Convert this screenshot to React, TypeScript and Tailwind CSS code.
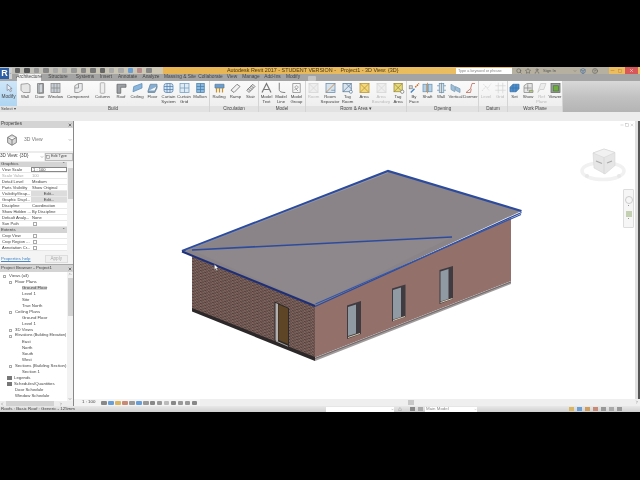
import type { ReactNode } from 'react';
import { ChevronDown, ChevronLeft, ChevronRight, ChevronUp, X, Minus, Square, HelpCircle, Star, Search, User, Box, Triangle } from 'lucide-react';

const tabs = [
  { label: 'Architecture', w: 24, active: true },
  { label: 'Structure', w: 24, ml: 5 },
  { label: 'Systems', w: 18, ml: 6 },
  { label: 'Insert', w: 12, ml: 6 },
  { label: 'Annotate', w: 19, ml: 6 },
  { label: 'Analyze', w: 16, ml: 6 },
  { label: 'Massing & Site', w: 28, ml: 7 },
  { label: 'Collaborate', w: 21, ml: 6 },
  { label: 'View', w: 10, ml: 6 },
  { label: 'Manage', w: 16, ml: 6 },
  { label: 'Add-Ins', w: 15, ml: 6 },
  { label: 'Modify', w: 14, ml: 6 },
];

const S = ({ children }: { children: ReactNode }) => (
  <svg viewBox="0 0 16 16" className="h-[12px] w-[13px]" fill="none" strokeWidth="1">
    {children}
  </svg>
);

const icons: Record<string, ReactNode> = {
  wall: <path d="M2 3l9-1 3 2v10l-9 0-3-3z" fill="#e6e6e6" stroke="#888" />,
  door: <path d="M4 2h8v13H4z M6 3l5-1v12l-5 1z" fill="#cfd4d8" stroke="#777" />,
  window: (
    <g stroke="#888">
      <rect x="2" y="2" width="12" height="12" fill="#c8cfd6" />
      <path d="M6 2v12M10 2v12M2 8h12" />
    </g>
  ),
  component: <path d="M3 5l5-3h5v9l-5 3H3z M8 2v6H3" fill="#e9ebec" stroke="#888" />,
  column: <rect x="5" y="1" width="6" height="14" rx="1" fill="#eeeeee" stroke="#a0a0a0" />,
  roof: <path d="M2 15V3h12v4H7v8z" fill="#9aa0a5" stroke="#666" />,
  ceiling: <path d="M3 6l11-4v6L2 13z" fill="#8ab6de" stroke="#5c8cb5" />,
  floor: <path d="M2 12l3-9h9v5l-3 6H2z M2 12l9 0 3-6" fill="#86aed2" stroke="#67849c" />,
  curtainSystem: (
    <g stroke="#4f7fb2">
      <rect x="2" y="2" width="12" height="12" rx="3" fill="#d8e6f2" />
      <path d="M6 2v12M10 2v12M2 6h12M2 10h12" />
    </g>
  ),
  curtainGrid: (
    <g stroke="#6f9dc2">
      <rect x="2" y="2" width="12" height="12" fill="#dfeaf3" />
      <path d="M8 2v12M2 8h12" />
    </g>
  ),
  mullion: (
    <g stroke="#457fae">
      <rect x="3" y="2" width="10" height="12" fill="#8cb8dc" />
      <path d="M8 2v12M3 6h10M3 10h10" />
    </g>
  ),
  railing: (
    <g>
      <path d="M2 3h12v5H2z" fill="#6c9dcc" stroke="#5a7d9c" />
      <path d="M4 8v6M8 8v6M12 8v6" stroke="#c98f22" strokeWidth="1.6" />
    </g>
  ),
  ramp: <path d="M2 11l8-8 4 3-8 8z" fill="#f2f2f2" stroke="#666" />,
  stair: <path d="M3 11l8-8 3 3-8 8zM5 9l3 3M7 7l3 3M9 5l3 3" fill="#e4e4e4" stroke="#666" />,
  modelText: <path d="M2 14L8 2l6 12M5 10h6" stroke="#777" strokeWidth="1.6" />,
  modelLine: <path d="M5 1v9c0 3 3 4 8 4" stroke="#666" strokeWidth="1.1" />,
  modelGroup: <path d="M3 2h10v12H3zM8 5a2 2 0 1 0 .1 0zM5 11l2-2 3 3" stroke="#888" />,
  disabled: (
    <g stroke="#d4d4d4">
      <rect x="2" y="2" width="12" height="12" fill="#eeeeee" />
      <path d="M2 2l12 12M14 2L2 14" />
    </g>
  ),
  roomSep: (
    <g stroke="#6a8dac">
      <rect x="2" y="2" width="12" height="12" fill="#d6e2ec" />
      <path d="M2 14L14 2" stroke="#c47a2a" />
      <path d="M9 11h5" />
    </g>
  ),
  tagRoom: (
    <g stroke="#5c7d9b">
      <rect x="2" y="2" width="11" height="11" fill="#d9e4ee" />
      <path d="M2 13L13 2M6 2l7 7" />
      <circle cx="12.5" cy="13" r="2" fill="#fff" />
    </g>
  ),
  area: (
    <g stroke="#b39232">
      <rect x="2" y="2" width="12" height="12" fill="#f3d77a" />
      <path d="M2 2l12 12M14 2L2 14" />
    </g>
  ),
  tagArea: (
    <g stroke="#9c8832">
      <rect x="2" y="2" width="11" height="11" fill="#e5da7f" />
      <path d="M2 2l11 11M13 2L2 13" />
      <circle cx="13" cy="13" r="2.2" fill="#fff" stroke="#777" />
    </g>
  ),
  byFace: (
    <g>
      <path d="M3 14l5-5" stroke="#4386c7" strokeWidth="2" />
      <path d="M9 7l5-5" stroke="#c46b2a" strokeWidth="2" strokeDasharray="2 1" />
      <rect x="1" y="5" width="4" height="4" fill="#d8d8d8" stroke="#888" />
    </g>
  ),
  shaft: (
    <g stroke="#6b95b6">
      <rect x="2" y="3" width="5" height="10" fill="#b7d0e4" />
      <rect x="9" y="3" width="5" height="10" fill="#b7d0e4" />
      <path d="M8 1v14" stroke="#c87a2b" />
    </g>
  ),
  openWall: (
    <g stroke="#6b95b6">
      <path d="M2 5h12M2 11h12" />
      <rect x="5" y="2" width="6" height="12" fill="#cfe0ec" />
      <path d="M8 1v14" stroke="#888" />
    </g>
  ),
  vertical: <path d="M2 3l5 3v7L2 10zM8 6l6 3v5l-6-3z" fill="#9dbfd9" stroke="#7a9cb6" />,
  dormer: <path d="M2 14l6-5 2-7h4M2 14h6l1-5" stroke="#bd7161" strokeWidth="1.1" />,
  level: <path d="M2 12l5-6 3 2 4-6M4 3l8 9" stroke="#d4d4d4" strokeDasharray="2 1" />,
  grid: <path d="M5 1v14M11 1v14M1 5h14M1 11h14" stroke="#d4d4d4" />,
  set: (
    <g stroke="#3b70a5">
      <path d="M2 7l4-4h8v6l-4 4H2z" fill="#4a8fd0" />
      <path d="M6 3v10M10 3v10M2 8h12" />
    </g>
  ),
  show: (
    <g stroke="#888">
      <path d="M2 14V5l4-3h7v8l-4 4z" fill="#e5e5e5" />
      <path d="M7 3v9M2 8h10" />
      <path d="M9 11h5v3H9z" fill="#b3cf6f" />
    </g>
  ),
  refPlane: <path d="M3 14L7 2h7l-3 8H6z" fill="#ececec" stroke="#c8c8c8" />,
  viewer: (
    <g>
      <rect x="2" y="2" width="12" height="12" fill="#9ca2a7" stroke="#666" />
      <rect x="5" y="5" width="7" height="7" fill="#6fae3e" stroke="#4e7b30" />
    </g>
  ),
};

type Tool = { label: string[]; w: number; icon: string; off?: boolean; caret?: boolean };

const panels: { title: string; tools: Tool[]; caret?: boolean }[] = [
  {
    title: 'Build',
    tools: [
      { label: ['Wall'], w: 16, icon: 'wall', caret: true },
      { label: ['Door'], w: 14, icon: 'door' },
      { label: ['Window'], w: 17, icon: 'window' },
      { label: ['Component'], w: 28, icon: 'component', caret: true },
      { label: ['Column'], w: 21, icon: 'column', caret: true },
      { label: ['Roof'], w: 16, icon: 'roof', caret: true },
      { label: ['Ceiling'], w: 16, icon: 'ceiling' },
      { label: ['Floor'], w: 15, icon: 'floor', caret: true },
      { label: ['Curtain', 'System'], w: 17, icon: 'curtainSystem' },
      { label: ['Curtain', 'Grid'], w: 14, icon: 'curtainGrid' },
      { label: ['Mullion'], w: 18, icon: 'mullion' },
    ],
  },
  {
    title: 'Circulation',
    tools: [
      { label: ['Railing'], w: 18, icon: 'railing', caret: true },
      { label: ['Ramp'], w: 15, icon: 'ramp' },
      { label: ['Stair'], w: 15, icon: 'stair', caret: true },
    ],
  },
  {
    title: 'Model',
    tools: [
      { label: ['Model', 'Text'], w: 15, icon: 'modelText' },
      { label: ['Model', 'Line'], w: 14, icon: 'modelLine' },
      { label: ['Model', 'Group'], w: 17, icon: 'modelGroup' },
    ],
  },
  {
    title: 'Room & Area',
    caret: true,
    tools: [
      { label: ['Room'], w: 15, icon: 'disabled', off: true },
      { label: ['Room', 'Separator'], w: 18, icon: 'roomSep' },
      { label: ['Tag', 'Room'], w: 17, icon: 'tagRoom' },
      { label: ['Area'], w: 16, icon: 'area', caret: true },
      { label: ['Area', 'Boundary'], w: 18, icon: 'disabled', off: true },
      { label: ['Tag', 'Area'], w: 16, icon: 'tagArea' },
    ],
  },
  {
    title: 'Opening',
    tools: [
      { label: ['By', 'Face'], w: 14, icon: 'byFace' },
      { label: ['Shaft'], w: 13, icon: 'shaft' },
      { label: ['Wall'], w: 14, icon: 'openWall' },
      { label: ['Vertical'], w: 15, icon: 'vertical' },
      { label: ['Dormer'], w: 15, icon: 'dormer' },
    ],
  },
  {
    title: 'Datum',
    tools: [
      { label: ['Level'], w: 14, icon: 'level', off: true },
      { label: ['Grid'], w: 14, icon: 'grid', off: true },
    ],
  },
  {
    title: 'Work Plane',
    tools: [
      { label: ['Set'], w: 13, icon: 'set' },
      { label: ['Show'], w: 14, icon: 'show' },
      { label: ['Ref', 'Plane'], w: 13, icon: 'refPlane', off: true },
      { label: ['Viewer'], w: 14, icon: 'viewer' },
    ],
  },
];

const graphicsRows: { k: string; v: string; faded?: boolean }[] = [
  { k: 'View Scale', v: '1 : 100' },
  { k: 'Scale Value', v: '100', faded: true },
  { k: 'Detail Level', v: 'Medium' },
  { k: 'Parts Visibility', v: 'Show Original' },
  { k: 'Visibility/Grap...', v: 'Edit...' },
  { k: 'Graphic Displ...', v: 'Edit...' },
  { k: 'Discipline', v: 'Coordination' },
  { k: 'Show Hidden ...', v: 'By Discipline' },
  { k: 'Default Analy...', v: 'None' },
  { k: 'Sun Path', v: '' },
];

const browserRows: { label: string; indent: number; tree?: boolean; selected?: boolean; dark?: boolean; narrow?: boolean }[] = [
  { label: 'Views (all)', indent: 9, tree: true },
  { label: 'Floor Plans', indent: 15, tree: true },
  { label: 'Ground Floor', indent: 22, selected: true },
  { label: 'Level 1', indent: 22 },
  { label: 'Site', indent: 22 },
  { label: 'True North', indent: 22 },
  { label: 'Ceiling Plans', indent: 15, tree: true },
  { label: 'Ground Floor', indent: 22 },
  { label: 'Level 1', indent: 22 },
  { label: '3D Views', indent: 15, tree: true },
  { label: 'Elevations (Building Elevation)', indent: 15, tree: true, narrow: true },
  { label: 'East', indent: 22 },
  { label: 'North', indent: 22 },
  { label: 'South', indent: 22 },
  { label: 'West', indent: 22 },
  { label: 'Sections (Building Section)', indent: 15, tree: true },
  { label: 'Section 1', indent: 22 },
  { label: 'Legends', indent: 14, dark: true },
  { label: 'Schedules/Quantities', indent: 14, dark: true },
  { label: 'Door Schedule', indent: 15 },
  { label: 'Window Schedule', indent: 15 },
];

const qatColors = ['#666', '#555', '#999', '#888', '#aaa', '#aaa', '#999', '#888', '#777', '#666', '#aaa', '#aaa', '#6a9fd6', '#b98a8a', '#888'];
const viewBarColors = ['#888', '#6a9fd6', '#dbb55f', '#c98a75', '#999', '#6a9fd6', '#999', '#888', '#999', '#bbb', '#888', '#999', '#999', '#888'];

function Building() {
  return (
    <svg viewBox="74 121 561 285" className="absolute inset-0 h-[285px] w-[561px]">
      <defs>
        <pattern id="brick" width="4" height="3" patternUnits="userSpaceOnUse" patternTransform="skewY(22)">
          <rect width="4" height="3" fill="#7b5e57" />
          <path d="M0 .5h2.4M2 2h2" stroke="#4c3f3d" strokeWidth=".9" />
          <path d="M2.6 .5h1M.4 2h1" stroke="#94776f" strokeWidth=".7" />
        </pattern>
      </defs>
      {/* brick side wall */}
      <polygon points="192,256 315,305 315,358 192,309" fill="url(#brick)" />
      <polygon points="192,308 315,357 315,361 192,311.5" fill="#2c2829" />
      {/* render side wall */}
      <polygon points="315,305 511,218 511,281 315,357.5" fill="#93706a" />
      <polygon points="315,357.5 511,281 511,284 315,361" fill="#a19b9c" />
      <path d="M315 358.5L511 282" stroke="#4a4546" strokeWidth=".6" />
      {/* windows */}
      <polygon points="347,305.5 361,301 361,334 347,339" fill="#3f3b40" />
      <polygon points="348,307 356,304.5 356,333.5 348,336" fill="#8f9aa2" />
      <path d="M348 337.5l12-4" stroke="#d8ccb0" strokeWidth="1" />
      <polygon points="392,288.5 405.5,284.5 405.5,317 392,321.5" fill="#3f3b40" />
      <polygon points="393,290 401,287.5 401,317 393,319.5" fill="#8f9aa2" />
      <path d="M393 320.5l12-4" stroke="#d8ccb0" strokeWidth="1" />
      <polygon points="439.5,270 453,266 453,299 439.5,304" fill="#3f3b40" />
      <polygon points="440.5,271.5 448.5,269 448.5,299 440.5,301.5" fill="#8f9aa2" />
      <path d="M440.5 302.5l12-4" stroke="#d8ccb0" strokeWidth="1" />
      {/* door */}
      <polygon points="274.5,301.5 289,308 289,347 274.5,340.5" fill="#2e2a29" />
      <polygon points="275.5,303 278,304 278,341.5 275.5,340.5" fill="#b1afb0" />
      <polygon points="278.5,304.5 288,308.5 288,344 278.5,340" fill="#5e4525" />
      <path d="M276 341l12 5.2" stroke="#b1afb0" strokeWidth=".9" />
      {/* roof */}
      <polygon points="182,251 388,171 521.5,211 315,306" fill="#8a8488" />
      <polygon points="192,250 452,237 315,305" fill="#8e888c" />
      <path d="M182 251L388 171L521.5 211" fill="none" stroke="#2d4b9c" strokeWidth="2.2" />
      <path d="M186 250.5L388 172.5" fill="none" stroke="#b7bccb" strokeWidth=".4" />
      <path d="M182 251.5L315 306" fill="none" stroke="#1e2f78" strokeWidth="2" />
      <path d="M315 306.5L521.5 212.5" fill="none" stroke="#2d4b9c" strokeWidth="1.3" />
      <path d="M315.5 304L521 214.5" fill="none" stroke="#3155ab" strokeWidth="1.1" />
      <path d="M192 250L452 237" fill="none" stroke="#2d4b9c" strokeWidth="1.7" />
      {/* cursor */}
      <path d="M214.5 264.5v5l1.2-1 1 2 .8-.4-1-2h1.6z" fill="#fff" stroke="#666" strokeWidth=".3" />
    </svg>
  );
}

function ViewCube() {
  return (
    <svg viewBox="0 0 50 36" className="absolute left-[505px] top-[27px] h-[36px] w-[50px]">
      <ellipse cx="24" cy="23" rx="21" ry="8.5" fill="none" stroke="#f1f1f1" strokeWidth="3.5" />
      <path d="M14 5l11-4 11 3.5v13L26 26 15 20z" fill="#e6e6e6" stroke="#d0d0d0" strokeWidth=".5" />
      <path d="M14 5l11 4.5 11-5L25 1z" fill="#f1f1f1" stroke="#d0d0d0" strokeWidth=".5" />
      <path d="M25 9.5V26" stroke="#c8c8c8" strokeWidth=".5" />
      <path d="M17 13l6 2.5M28 15l5-2" stroke="#aaa" strokeWidth="1.2" />
      <circle cx="8" cy="28" r="2" fill="#e8e8e8" />
      <circle cx="40" cy="28" r="2" fill="#e8e8e8" />
    </svg>
  );
}

export default function App() {
  return (
    <div className="flex h-[480px] w-[640px] flex-col overflow-hidden bg-black font-['Liberation_Sans',sans-serif] text-[#444] blur-[0.45px]">
      <div className="h-[67px]" />

      {/* title bar */}
      <div className="relative flex h-[7px] items-center bg-[#e9bb58]">
        <div className="flex h-full w-[163px] items-center gap-[4px] bg-gradient-to-r from-[#bdbdb8] to-[#cfc9b4] pl-[15px]">
          {qatColors.map((c, i) => (
            <span key={i} className="h-[5px] w-[5.4px] rounded-[1px]" style={{ backgroundColor: c }} />
          ))}
        </div>
        <div className="flex-1 whitespace-nowrap bg-gradient-to-r from-[#e8b552] to-[#e9bd60] pl-[64px] text-[5.4px] leading-[7px] text-[#4a3a16]">
          Autodesk Revit 2017 - STUDENT VERSION - &nbsp; Project1 - 3D View: {'{3D}'}
        </div>
        <div className="flex h-full w-[188px] items-center bg-[#e9bd60]">
          <div className="ml-[4px] h-[6px] w-[56px] bg-white pl-[2px] text-[3.8px] leading-[6px] text-[#888]">Type a keyword or phrase</div>
          <div className="flex h-full w-[97px] items-center gap-[3px] bg-[#b5b0a0] pl-[4px] text-[#555]">
            <Search className="h-[6px] w-[6px]" />
            <Star className="h-[6px] w-[6px]" />
            <User className="h-[6px] w-[6px]" />
            <span className="text-[4.2px] leading-[6px]">Sign In</span>
            <ChevronDown className="ml-[14px] h-[4px] w-[4px]" />
            <Box className="h-[6px] w-[6px] text-[#2d5fa3]" />
            <HelpCircle className="ml-[3px] h-[6px] w-[6px]" />
          </div>
          <div className="ml-auto flex h-full items-center">
            <Minus className="mr-[3px] h-[5px] w-[5px] text-[#bb6a2a]" />
            <Square className="mr-[3px] h-[4px] w-[4px] text-[#bb6a2a]" />
            <span className="mr-[2px] flex h-full w-[13px] items-center justify-center bg-[#d8585a]">
              <X className="h-[5px] w-[5px] text-white" />
            </span>
          </div>
        </div>
        <div className="absolute left-0 top-[1px] flex h-[11px] w-[12px] items-center bg-[#cfcfcf]">
          <span className="flex h-[11px] w-[9px] items-center justify-center bg-[#2c5fa5] text-[9px] font-bold leading-none text-white">R</span>
          <ChevronDown className="h-[3px] w-[3px]" />
        </div>
      </div>

      {/* tabs */}
      <div className="flex h-[7px] items-end bg-[#a4a4a4] pl-[17px]">
        {tabs.map((t) => (
          <div
            key={t.label}
            className={`flex h-[7px] shrink-0 items-center justify-center whitespace-nowrap text-[4.8px] leading-none ${t.active ? 'bg-[#f4f4f4]' : ''}`}
            style={{ width: t.w, marginLeft: t.ml ?? 0 }}
          >
            {t.label}
          </div>
        ))}
        <div className="ml-[8px] h-[5px] w-[8px] rounded-[1px] bg-[#c4c4c4]" />
      </div>

      {/* ribbon */}
      <div className="flex h-[31px] bg-gradient-to-b from-[#fafafa] to-[#ececec]">
        <div className="flex w-[17px] shrink-0 flex-col">
          <div className="flex h-[25px] flex-col items-center bg-gradient-to-b from-[#cfe6f8] to-[#aed5f2] pt-[2px]">
            <svg viewBox="0 0 16 16" className="h-[10px] w-[10px]" fill="#e7eef5" stroke="#778">
              <path d="M5 2v10l3-2 2 4 2-1-2-4h3z" />
            </svg>
            <span className="mt-[2px] text-[4.8px] leading-none">Modify</span>
          </div>
          <div className="flex h-[6px] items-center whitespace-nowrap bg-[#e2e2e2] pl-[1px] text-[4.2px] leading-none">Select ▾</div>
        </div>
        {panels.map((p) => (
          <div key={p.title} className="flex shrink-0 flex-col border-r border-[#d4d4d4]">
            <div className="flex h-[25px]">
              {p.tools.map((t, i) => (
                <div key={i} className={`flex flex-col items-center pt-[1px] ${t.off ? 'text-[#bbb]' : ''}`} style={{ width: t.w }}>
                  <S>{icons[t.icon]}</S>
                  <div className="mt-[1px] whitespace-nowrap text-center text-[4.3px] leading-[4.8px]">
                    {t.label.map((l) => (
                      <div key={l}>{l}</div>
                    ))}
                  </div>
                </div>
              ))}
            </div>
            <div className="flex h-[6px] items-center justify-center bg-[#e2e2e2] text-[4.6px] leading-none">
              {p.title}
              {p.caret ? ' ▾' : ''}
            </div>
          </div>
        ))}
        <div className="flex-1 bg-gradient-to-b from-[#d8d8d8] via-[#c2c2c2] to-[#b4b4b4]" />
      </div>

      {/* options band */}
      <div className="h-[9px] bg-[#ececec]" />

      {/* main */}
      <div className="flex h-[285px]">
        {/* left panels */}
        <div className="flex w-[74px] shrink-0 flex-col border-r border-[#888] bg-[#f4f4f4]">
          {/* properties */}
          <div className="flex h-[143px] flex-col">
            <div className="flex h-[7px] items-center justify-between bg-[#d4d4d4] px-[1px] text-[4.6px] leading-none">
              <span>Properties</span>
              <X className="h-[4px] w-[4px]" strokeWidth={4} />
            </div>
            <div className="flex h-[23px] items-center bg-white">
              <svg viewBox="0 0 16 16" className="ml-[5px] h-[14px] w-[14px]" fill="#d8d8d8" stroke="#777">
                <path d="M3 5l5-3 5 3v6l-5 3-5-3zM3 5l5 3 5-3M8 8v6" />
              </svg>
              <span className="ml-[5px] text-[5px] leading-none text-[#777]">3D View</span>
              <ChevronDown className="ml-auto mr-[1px] h-[4px] w-[4px]" />
            </div>
            <div className="flex h-[11px] items-center gap-[1px] bg-[#ececec]">
              <div className="flex h-[8px] w-[44px] items-center justify-between bg-white text-[4.6px] leading-none">
                <span>3D View: {'{3D}'}</span>
                <ChevronDown className="h-[4px] w-[4px]" />
              </div>
              <div className="flex h-[8px] flex-1 items-center gap-[1px] overflow-hidden border border-[#bbb] text-[3.8px] leading-none">
                <Square className="h-[4px] w-[4px] shrink-0" />
                <span className="whitespace-nowrap">Edit Type</span>
              </div>
            </div>
            <div className="flex min-h-0 flex-1">
              <div className="min-w-0 flex-1 overflow-hidden">
                <div className="flex h-[5px] items-center justify-between bg-[#d4d4d4] pl-[1px] pr-[2px] text-[4.4px] leading-none">
                  <span>Graphics</span>
                  <span>⌃</span>
                </div>
                {graphicsRows.map(({ k, v, faded }) => (
                  <div key={k} className={`flex h-[6px] border-b border-[#e8e8e8] bg-white text-[4.1px] leading-[5.5px] ${faded ? 'text-[#aaa]' : ''}`}>
                    <span className="w-[31px] shrink-0 whitespace-nowrap pl-[2px]">{k}</span>
                    {v === 'Edit...' ? (
                      <span className="flex-1 bg-[#dcdcdc] text-center">{v}</span>
                    ) : v === '1 : 100' ? (
                      <span className="flex-1 border border-[#888] pl-[1px] leading-[4px]">{v}</span>
                    ) : v ? (
                      <span className="flex-1 whitespace-nowrap pl-[1px]">{v}</span>
                    ) : (
                      <span className="ml-[2px] mt-[1px] h-[4px] w-[4px] border border-[#aaa] bg-white" />
                    )}
                  </div>
                ))}
                <div className="flex h-[6px] items-center justify-between bg-[#d4d4d4] pl-[1px] pr-[2px] text-[4.4px] leading-none">
                  <span>Extents</span>
                  <span>⌃</span>
                </div>
                {['Crop View', 'Crop Region ...', 'Annotation Cr...'].map((k) => (
                  <div key={k} className="flex h-[6px] border-b border-[#e8e8e8] bg-white text-[4.1px] leading-[5.5px]">
                    <span className="w-[31px] shrink-0 whitespace-nowrap pl-[2px]">{k}</span>
                    <span className="ml-[2px] mt-[1px] h-[4px] w-[4px] border border-[#aaa] bg-white" />
                  </div>
                ))}
              </div>
              <div className="relative w-[6px] bg-[#f2f2f2]">
                <div className="absolute left-[1px] top-[6px] h-[31px] w-[5px] bg-[#d2d2d2]" />
              </div>
            </div>
            <div className="flex h-[10px] items-center justify-between bg-[#f4f4f4] pl-[1px] pr-[5px]">
              <span className="text-[4.4px] leading-none text-[#4a86c2] underline">Properties help</span>
              <span className="border border-[#ddd] bg-[#f0f0f0] px-[5px] text-[4.6px] leading-[6px] text-[#aaa]">Apply</span>
            </div>
          </div>

          {/* project browser */}
          <div className="flex min-h-0 flex-1 flex-col border-t border-[#aaa]">
            <div className="flex h-[7px] shrink-0 items-center justify-between bg-[#d4d4d4] px-[1px] text-[4.4px] leading-none">
              <span>Project Browser - Project1</span>
              <X className="h-[4px] w-[4px]" strokeWidth={4} />
            </div>
            <div className="flex min-h-0 flex-1 bg-white">
              <div className="min-w-0 flex-1 overflow-hidden pt-[1px]">
                {browserRows.map((r, i) => (
                  <div key={i} className={`relative flex h-[6px] items-center whitespace-nowrap leading-none ${r.narrow ? 'text-[3.8px]' : 'text-[4.3px]'}`} style={{ paddingLeft: r.indent }}>
                    {r.tree && <span className="absolute h-[3px] w-[3px] border border-[#aaa]" style={{ left: r.indent - 6 }} />}
                    {r.dark && <span className="absolute left-[7px] h-[4px] w-[5px] bg-[#777]" />}
                    <span className={r.selected ? 'bg-[#d8d8d8]' : ''}>{r.label}</span>
                  </div>
                ))}
              </div>
              <div className="relative w-[6px] shrink-0 bg-[#f2f2f2]">
                <div className="absolute left-[1px] top-[6px] h-[38px] w-[5px] bg-[#d2d2d2]" />
                <ChevronUp className="absolute left-[1px] top-0 h-[4px] w-[4px]" />
                <ChevronDown className="absolute bottom-0 left-[1px] h-[4px] w-[4px]" />
              </div>
            </div>
            <div className="relative h-[5px] shrink-0 bg-[#ededed]">
              <ChevronLeft className="absolute left-0 top-[1px] h-[4px] w-[4px]" />
              <div className="absolute left-[6px] top-0 h-[5px] w-[48px] bg-[#d2d2d2]" />
              <ChevronRight className="absolute right-[10px] top-[1px] h-[4px] w-[4px]" />
            </div>
          </div>
        </div>

        {/* canvas */}
        <div className="flex min-w-0 flex-1 flex-col">
          <div className="flex min-h-0 flex-1">
            <div className="relative min-w-0 flex-1 overflow-hidden bg-white">
              <Building />
              <ViewCube />
              <div className="absolute right-[1px] top-[2px] flex items-center gap-[1px] text-[#999]">
                <Minus className="h-[4px] w-[4px]" />
                <Square className="h-[4px] w-[4px]" />
                <X className="h-[4px] w-[4px]" />
              </div>
              <div className="absolute left-[549px] top-[68px] flex h-[39px] w-[11px] flex-col items-center rounded-[1px] border border-[#ddd] bg-[#f6f6f6]">
                <span className="mt-[6px] h-[8px] w-[8px] rounded-full border border-[#ccc]" />
                <span className="mt-[1px] h-[1px] w-[1px] bg-[#999]" />
                <span className="mt-[5px] h-[6px] w-[6px] bg-[#c4d0b2]" />
                <span className="mt-[1px] h-[1px] w-[1px] bg-[#999]" />
              </div>
            </div>
            <div className="w-[3px] bg-[#e0e0e0]" />
            <div className="w-[2px] bg-[#555]" />
          </div>
          <div className="flex h-[7px] shrink-0 items-center bg-[#f4f4f4]">
            <span className="ml-[8px] w-[19px] text-[4.4px] leading-none">1 : 100</span>
            <div className="flex gap-[1.4px]">
              {viewBarColors.map((c, i) => (
                <span key={i} className="h-[4px] w-[5.6px] rounded-[1px]" style={{ backgroundColor: c }} />
              ))}
            </div>
            <div className="relative ml-[3px] h-full flex-1 bg-[#efefef]">
              <span className="absolute left-[208px] top-[1px] h-[5px] w-[6px] bg-[#c8c8c8]" />
              <ChevronRight className="absolute right-[1px] top-[1px] h-[4px] w-[4px]" />
            </div>
          </div>
        </div>
      </div>

      {/* status bar */}
      <div className="relative flex h-[6px] items-center bg-gradient-to-b from-[#e8e8e8] to-[#d0d0d0] text-[4.4px] leading-none">
        <span className="ml-[1px] w-[325px] whitespace-nowrap">Roofs : Basic Roof : Generic - 125mm</span>
        <div className="flex h-[5px] w-[68px] items-center justify-end bg-white">
          <ChevronDown className="h-[3px] w-[3px]" />
        </div>
        <Triangle className="ml-[4px] h-[4px] w-[4px] text-[#888]" />
        <span className="ml-[8px] h-[4px] w-[5px] bg-[#888]" />
        <span className="ml-[3px] h-[4px] w-[5px] bg-[#aaa]" />
        <div className="ml-[2px] flex h-[5px] w-[52px] items-center justify-between bg-white pl-[1px] text-[#888]">
          <span>Main Model</span>
          <ChevronDown className="h-[3px] w-[3px]" />
        </div>
        <div className="ml-auto mr-[18px] flex gap-[3px]">
          {['#dbb55f', '#6a9fd6', '#cf9c5c', '#c98a75', '#999', '#aaa', '#999'].map((c, i) => (
            <span key={i} className="h-[4px] w-[5px]" style={{ backgroundColor: c }} />
          ))}
        </div>
      </div>

      <div className="flex-1" />
    </div>
  );
}
